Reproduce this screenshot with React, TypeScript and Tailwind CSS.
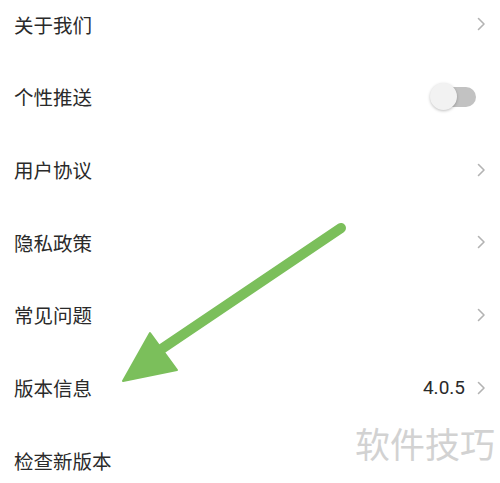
import React from "react";

const Chevron = () => (
  <svg width="9" height="14" viewBox="0 0 9 14" className="shrink-0">
    <path d="M1.5 1.5 L7 7 L1.5 12.5" fill="none" stroke="#b3b3b3" strokeWidth="1.6" strokeLinecap="round" strokeLinejoin="round" />
  </svg>
);

const Toggle = () => (
  <div className="relative w-[46px] h-[28px] mr-[10px]">
    <div className="absolute left-[6px] right-0 top-[4px] h-[20px] rounded-full bg-[#c2c2c2]" />
    <div className="absolute left-0 top-0 w-[27px] h-[27px] rounded-full bg-[#f2f2f2] shadow-[0_1px_3px_rgba(0,0,0,0.25)]" />
  </div>
);

type Row = { label: string; right: "chevron" | "toggle" | "version" | "none" };

const rows: Row[] = [
  { label: "关于我们", right: "chevron" },
  { label: "个性推送", right: "toggle" },
  { label: "用户协议", right: "chevron" },
  { label: "隐私政策", right: "chevron" },
  { label: "常见问题", right: "chevron" },
  { label: "版本信息", right: "version" },
  { label: "检查新版本", right: "none" },
];

export default function App() {
  return (
    <div
      className="relative w-[500px] h-[483px] overflow-hidden bg-white"
      style={{ fontFamily: '"Noto Sans CJK SC", "Noto Sans", sans-serif' }}
    >
      <div className="flex flex-col mt-[-12px]">
        {rows.map((r) => (
          <div key={r.label} className="flex items-center justify-between h-[72.67px] pl-[14px] pr-[14px]">
            <span className="text-[19.5px] text-[#2a2a2a] leading-none">{r.label}</span>
            {r.right === "chevron" && <Chevron />}
            {r.right === "toggle" && <Toggle />}
            {r.right === "version" && (
              <div className="flex items-center gap-[12px]">
                <span className="text-[19px] text-[#2a2a2a] leading-none" style={{ fontFamily: '"Roboto", "Liberation Sans", sans-serif' }}>4.0.5</span>
                <Chevron />
              </div>
            )}
          </div>
        ))}
      </div>

      <svg className="absolute left-0 top-0 pointer-events-none" width="500" height="483" viewBox="0 0 500 483">
        <line x1="341" y1="228" x2="160" y2="350" stroke="#7bbf5b" strokeWidth="10" strokeLinecap="round" />
        <polygon points="150,333 177,370 123,381" fill="#7bbf5b" stroke="#7bbf5b" strokeWidth="2" strokeLinejoin="round" />
      </svg>

      <div className="absolute left-[355px] top-[425px] text-[35px] leading-none text-[#d2d2d2]">
        软件技巧
      </div>
    </div>
  );
}
